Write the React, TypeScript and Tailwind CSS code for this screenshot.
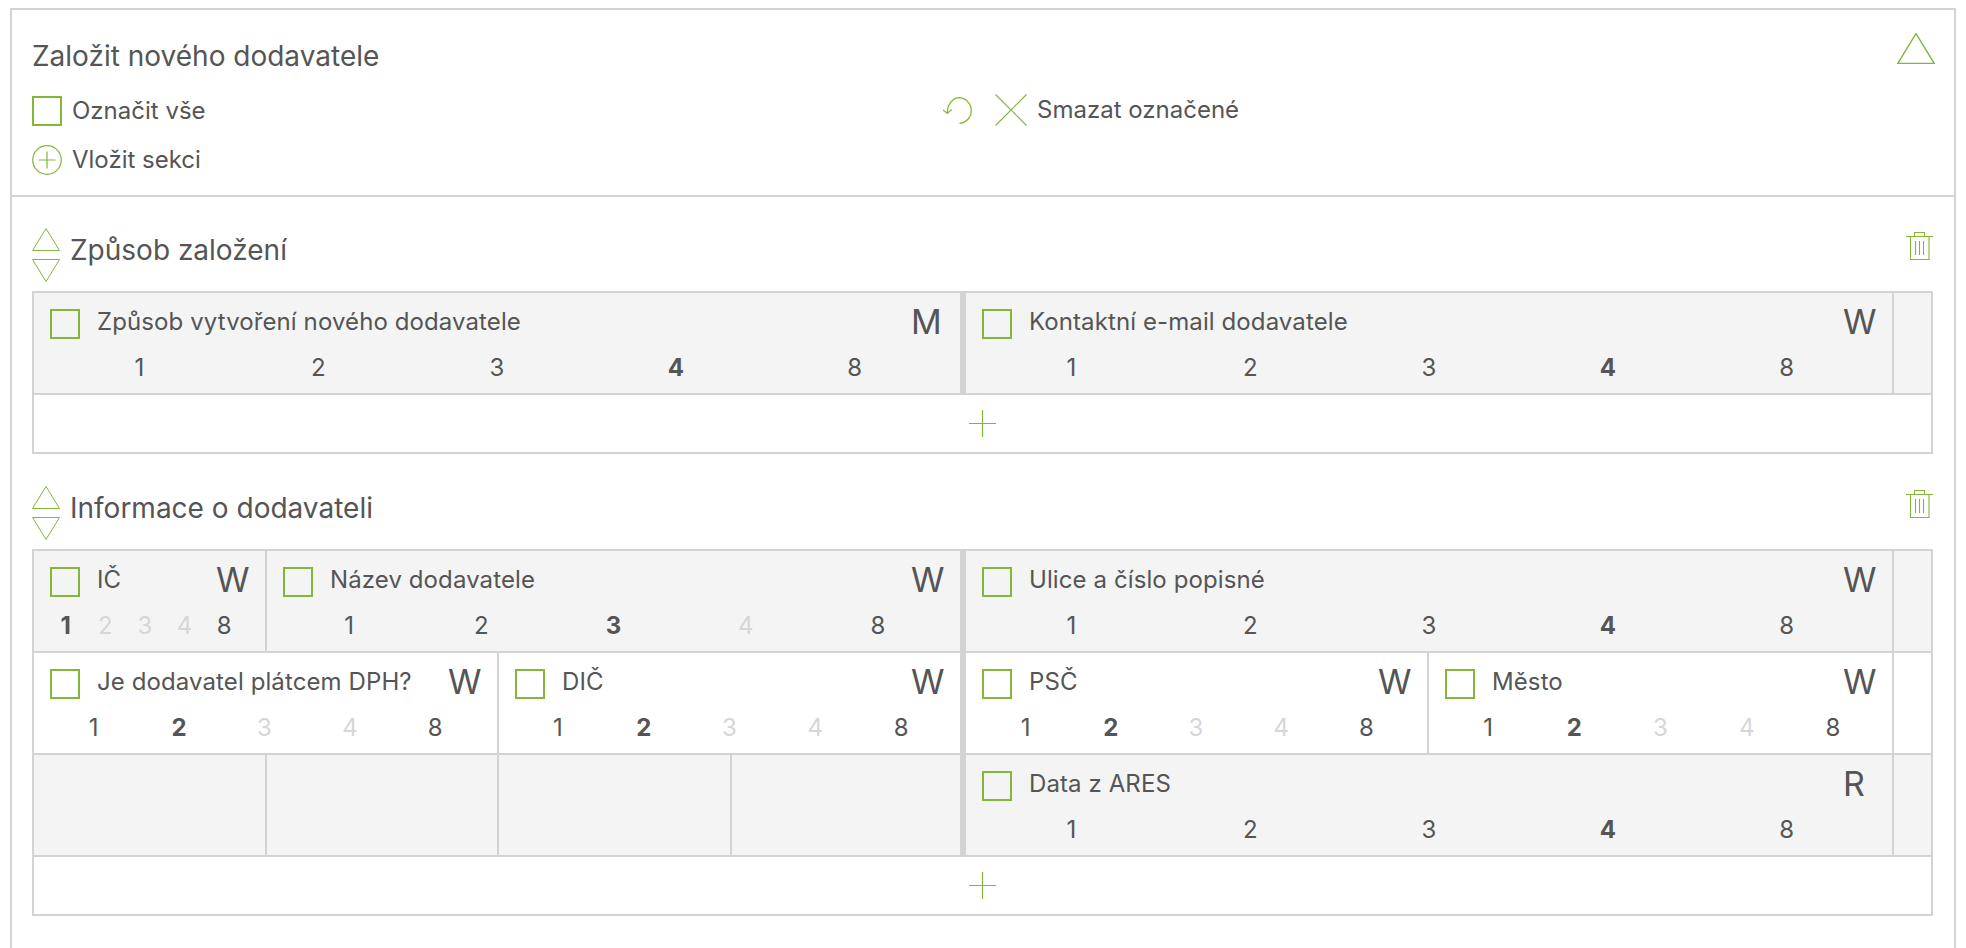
const green = "#84b63a";

type Num = { n: string; state?: "bold" | "off" };

const nums = (bold: string, off: string[] = []): Num[] =>
  ["1", "2", "3", "4", "8"].map((n) => ({
    n,
    state: n === bold ? "bold" : off.includes(n) ? "off" : undefined,
  }));

function TriangleUp({ className }: { className: string }) {
  return (
    <svg viewBox="0 0 28 23" fill="none" className={className} stroke={green} strokeWidth="1">
      <path d="M14 0.5 L27.5 22.5 H0.5 Z" />
    </svg>
  );
}

function TriangleDown({ className }: { className: string }) {
  return (
    <svg viewBox="0 0 28 23" fill="none" className={className} stroke={green} strokeWidth="1">
      <path d="M14 22.5 L27.5 0.5 H0.5 Z" />
    </svg>
  );
}

function Trash() {
  return (
    <svg viewBox="0 0 27 28" fill="none" className="h-7 w-[27px]" stroke={green} strokeWidth="1.1">
      <path d="M0 4.5 H27 M4.5 4.5 V27.5 H23 V4.5 M8.5 4.5 V0.5 H18.5 V4.5" />
      <path d="M9.5 9 V23 M13.5 9 V23 M17.5 9 V23" />
    </svg>
  );
}

function Box() {
  return <span className="block h-[30px] w-[30px] shrink-0 border-2 border-[#84b63a]" />;
}

function Cell({
  label,
  mode,
  numbers,
  className = "",
  numClass = "",
}: {
  label: string;
  mode: string;
  numbers: Num[];
  className?: string;
  numClass?: string;
}) {
  return (
    <div className={`flex flex-col pl-4 pr-4 pt-4 ${className}`}>
      <div className="flex h-[30px] items-start">
        <Box />
        <span className="-mt-px ml-[17px] flex-1 whitespace-nowrap text-[24px] leading-[28px] tracking-[0.1px]">
          {label}
        </span>
        <span className="-mt-[6px] w-[33px] shrink-0 text-[34px] leading-[38px]">{mode}</span>
      </div>
      <div className={`mt-[15px] grid grid-cols-5 text-center text-[24px] leading-[28px] ${numClass}`}>
        {numbers.map((x) => (
          <span
            key={x.n}
            className={x.state === "bold" ? "font-bold" : x.state === "off" ? "text-[#d6d6d6]" : ""}
          >
            {x.n}
          </span>
        ))}
      </div>
    </div>
  );
}

function Row({
  gray,
  left,
  right,
}: {
  gray?: boolean;
  left: React.ReactNode;
  right: React.ReactNode;
}) {
  return (
    <div className={`flex h-[102px] border-b-2 border-[#d3d3d3] ${gray ? "bg-[#f4f4f4]" : "bg-white"}`}>
      <div className="flex w-[932px] border-r-[6px] border-[#d3d3d3]">{left}</div>
      <div className="flex w-[928px] border-r-2 border-[#d3d3d3]">{right}</div>
      <div className="flex-1" />
    </div>
  );
}

function AddRow() {
  return (
    <div className="flex h-[57px] items-center justify-center">
      <svg viewBox="0 0 27 27" className="h-[27px] w-[27px]" stroke={green} strokeWidth="1.2" fill="none">
        <path d="M0 13.5 H27 M13.5 0 V27" />
      </svg>
    </div>
  );
}

function SectionHead({ title }: { title: string }) {
  return (
    <div className="mb-[9px] flex h-[54px] items-start">
      <div className="flex w-7 flex-col gap-2">
        <TriangleUp className="h-[23px] w-7" />
        <TriangleDown className="h-[23px] w-7" />
      </div>
      <h2 className="ml-[10px] mt-[5px] text-[28px] font-normal leading-[34px]">{title}</h2>
      <div className="ml-auto mt-1">
        <Trash />
      </div>
    </div>
  );
}

export default function App() {
  return (
    <div className="h-[948px] overflow-hidden bg-white pl-[10px] pt-2 font-['Inter',sans-serif] text-[#555555]">
      <div className="w-[1946px] border-2 border-[#d3d3d3]">
        <div className="relative h-[187px] border-b-2 border-[#d3d3d3] px-5">
          <h1 className="pt-[29px] text-[28px] font-normal leading-[34px]">Založit nového dodavatele</h1>
          <div className="mt-[21px] flex">
            <div className="flex w-[911px] items-center self-end">
              <Box />
              <span className="ml-[10px] text-[24px] leading-[28px]">Označit vše</span>
            </div>
            <div className="flex items-center">
              <svg viewBox="0 0 30 28" className="mt-[2px] h-7 w-[30px]" fill="none" stroke={green} strokeWidth="1.3">
                <path d="M4.3 16 C4 9 9 0.7 16.5 0.7 A12.9 12.9 0 0 1 16.5 26.4" />
                <path d="M0 13 L4.3 16.4 L8.7 12.4" />
              </svg>
              <svg viewBox="0 0 32 32" className="ml-[22px] h-8 w-8" fill="none" stroke={green} strokeWidth="1.2">
                <path d="M0.5 0.5 L31.5 31.5 M31.5 0.5 L0.5 31.5" />
              </svg>
              <span className="ml-[10px] text-[24px] leading-[28px]">Smazat označené</span>
            </div>
          </div>
          <div className="mt-[19px] flex items-center">
            <svg viewBox="0 0 30 30" className="h-[30px] w-[30px]" fill="none" stroke={green} strokeWidth="1.2">
              <circle cx="15" cy="15" r="14.3" />
              <path d="M6.5 15 H23.5 M15 6.5 V23.5" />
            </svg>
            <span className="ml-[10px] text-[24px] leading-[28px]">Vložit sekci</span>
          </div>
          <TriangleUp className="absolute right-[19px] top-[23px] h-[31px] w-[38px]" />
        </div>

        <div className="pl-5 pr-[21px] pt-[31px]">
          <SectionHead title="Způsob založení" />
          <div className="border-2 border-[#d3d3d3]">
            <Row
              gray
              left={<Cell className="flex-1" label="Způsob vytvoření nového dodavatele" mode="M" numbers={nums("4")} />}
              right={<Cell className="flex-1" label="Kontaktní e-mail dodavatele" mode="W" numbers={nums("4")} />}
            />
            <AddRow />
          </div>

          <div className="mt-8">
            <SectionHead title="Informace o dodavateli" />
            <div className="border-2 border-[#d3d3d3]">
              <Row
                gray
                left={
                  <>
                    <Cell
                      className="w-[233px] border-r-2 border-[#d3d3d3]"
                      label="IČ"
                      mode="W"
                      numbers={nums("1", ["2", "3", "4"])}
                      numClass="-ml-1 mr-[5px]"
                    />
                    <Cell className="flex-1" label="Název dodavatele" mode="W" numbers={nums("3", ["4"])} />
                  </>
                }
                right={<Cell className="flex-1" label="Ulice a číslo popisné" mode="W" numbers={nums("4")} />}
              />
              <Row
                left={
                  <>
                    <Cell
                      className="w-[465px] border-r-2 border-[#d3d3d3]"
                      label="Je dodavatel plátcem DPH?"
                      mode="W"
                      numbers={nums("2", ["3", "4"])}
                      numClass="ml-px mr-[3px]"
                    />
                    <Cell className="flex-1" label="DIČ" mode="W" numbers={nums("2", ["3", "4"])} />
                  </>
                }
                right={
                  <>
                    <Cell
                      className="w-[463px] border-r-2 border-[#d3d3d3]"
                      label="PSČ"
                      mode="W"
                      numbers={nums("2", ["3", "4"])}
                      numClass="ml-px mr-[2px]"
                    />
                    <Cell className="flex-1" label="Město" mode="W" numbers={nums("2", ["3", "4"])} />
                  </>
                }
              />
              <Row
                gray
                left={
                  <>
                    <div className="w-[233px] border-r-2 border-[#d3d3d3]" />
                    <div className="w-[232px] border-r-2 border-[#d3d3d3]" />
                    <div className="w-[233px] border-r-2 border-[#d3d3d3]" />
                    <div className="flex-1" />
                  </>
                }
                right={<Cell className="flex-1" label="Data z ARES" mode="R" numbers={nums("4")} />}
              />
              <AddRow />
            </div>
          </div>

          <div className="mt-8">
            <TriangleUp className="h-[23px] w-7" />
          </div>
        </div>
      </div>
    </div>
  );
}
